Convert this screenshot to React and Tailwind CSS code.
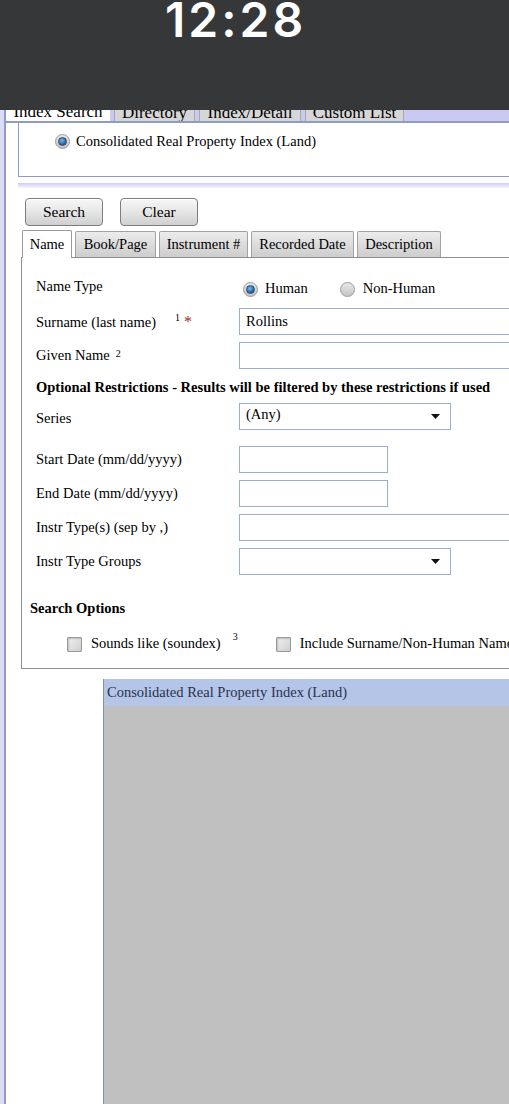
export default function App() {
  return (
    <div className="relative w-[509px] h-[1104px] overflow-hidden bg-white [font-family:Liberation_Serif,Times_New_Roman,serif] text-black">
      {/* status bar */}
      <div className="h-[110px] bg-[#363739] overflow-hidden">
        <div className="pl-[165px] [font-family:Inter,sans-serif] font-semibold text-[48px] tracking-[3px] leading-[40px] text-white">
          12:28
        </div>
      </div>

      <div className="flex h-[994px]">
        {/* left page edge */}
        <div className="w-[4px] bg-[#dcdcfa] shrink-0" />
        <div className="w-[2px] bg-[#8e9cc2] shrink-0" />

        <div className="w-[720px] shrink-0">
          {/* top tab strip (cut off under status bar) */}
          <div className="h-[11px] bg-[#c9c9f3] overflow-hidden">
            <div className="flex gap-[4px] mt-[-11px] h-[26px] text-[17px] leading-[26px]">
              <div className="w-[104px] bg-white text-center">Index Search</div>
              <div className="w-[81px] bg-[#d6d6d6] border border-[#a8a8a8] text-center">Directory</div>
              <div className="w-[102px] bg-[#d6d6d6] border border-[#a8a8a8] text-center">Index/Detail</div>
              <div className="w-[99px] bg-[#d6d6d6] border border-[#a8a8a8] text-center">Custom List</div>
            </div>
          </div>
          <div className="h-[2px] bg-[#8e9cc2]" />

          {/* index choice */}
          <div className="ml-[12px] h-[54px] border-l-[1.5px] border-b-[1.5px] border-[#8e9cc2] flex items-start pt-[8px] pl-[36px]">
            <div className="flex items-center gap-[6px] text-[14.5px]">
              <Radio checked />
              <span>Consolidated Real Property Index (Land)</span>
            </div>
          </div>
          <div className="ml-[12px] mt-[6px] h-[5px] bg-gradient-to-b from-[#cfcff5] to-[#f4f4fd]" />

          {/* buttons */}
          <div className="flex gap-[17px] ml-[19px] mt-[10px]">
            <Button>Search</Button>
            <Button>Clear</Button>
          </div>

          {/* tabs */}
          <div className="flex items-end gap-[3px] ml-[16px] mt-[4px] h-[27px]">
            <div className="h-[28px] w-[50px] bg-white border border-b-0 border-[#9a9a9a] rounded-t-[2px] text-[14.5px] flex items-center justify-center relative top-[1px]">
              Name
            </div>
            <Tab w="w-[81px]">Book/Page</Tab>
            <Tab w="w-[89px]">Instrument #</Tab>
            <Tab w="w-[103px]">Recorded Date</Tab>
            <Tab w="w-[84px]">Description</Tab>
          </div>

          {/* form panel */}
          <div className="ml-[15px] border border-[#8f8f8f] pl-[14px] pt-[16px] pb-[14px] text-[14.5px]">
            <div className="flex items-center h-[26px]">
              <Label>Name Type</Label>
              <div className="flex items-center mt-[4px] ml-[4px]">
                <Radio checked />
                <span className="ml-[7px]">Human</span>
                <span className="ml-[32px] flex"><Radio /></span>
                <span className="ml-[8px]">Non-Human</span>
              </div>
            </div>

            <div className="flex items-center h-[27px] mt-[8px]">
              <div className="w-[203px] shrink-0 whitespace-nowrap">
                <span>Surname (last name)</span>
                <span className="text-[10px] ml-[19px] relative top-[-6px]">1</span>
                <span className="ml-[4px] text-[#a52a2a] text-[16px]">*</span>
              </div>
              <Input wide value="Rollins" />
            </div>

            <div className="flex items-center h-[27px] mt-[7px]">
              <div className="w-[203px] shrink-0 whitespace-nowrap">
                <span>Given Name</span>
                <span className="text-[10px] ml-[6px] relative top-[-3px]">2</span>
              </div>
              <Input wide />
            </div>

            <div className="h-[20px] mt-[9px] flex items-center font-bold whitespace-nowrap">
              Optional Restrictions - Results will be filtered by these restrictions if used
            </div>

            <div className="flex items-end h-[27px] mt-[5px]">
              <Label>Series</Label>
              <Select value="(Any)" />
            </div>

            <div className="flex items-center h-[27px] mt-[16px]">
              <Label>Start Date (mm/dd/yyyy)</Label>
              <Input />
            </div>
            <div className="flex items-center h-[27px] mt-[7px]">
              <Label>End Date (mm/dd/yyyy)</Label>
              <Input />
            </div>
            <div className="flex items-center h-[27px] mt-[7px]">
              <Label>Instr Type(s) (sep by ,)</Label>
              <Input wide />
            </div>
            <div className="flex items-center h-[27px] mt-[7px]">
              <Label>Instr Type Groups</Label>
              <Select />
            </div>

            <div className="h-[20px] mt-[24px] ml-[-6px] flex items-center font-bold">Search Options</div>

            <div className="flex items-center h-[20px] mt-[15px] ml-[31px] whitespace-nowrap">
              <Checkbox />
              <span className="ml-[9px]">Sounds like (soundex)</span>
              <span className="text-[10px] ml-[12px] relative top-[-8px]">3</span>
              <span className="ml-[38px] flex"><Checkbox /></span>
              <span className="ml-[9px]">Include Surname/Non-Human Name</span>
            </div>
          </div>

          {/* results */}
          <div className="ml-[97px] mt-[10px] border-l border-[#7f8fb2]">
            <div className="h-[27px] bg-[#b5c5e8] text-[14.5px] text-[#27324d] flex items-center pl-[3px]">
              Consolidated Real Property Index (Land)
            </div>
            <div className="h-[420px] bg-[#c0c0c0]" />
          </div>
        </div>
      </div>
    </div>
  );
}

function Label({ children }) {
  return <div className="w-[203px] shrink-0 whitespace-nowrap">{children}</div>;
}

function Input({ wide, value }) {
  return (
    <div
      className={`${wide ? "w-[400px]" : "w-[149px]"} h-[27px] shrink-0 border-[1.5px] border-[#9aaed2] bg-white flex items-center pl-[6px] text-[14.5px]`}
    >
      {value}
    </div>
  );
}

function Select({ value }) {
  return (
    <div className="w-[212px] h-[27px] shrink-0 border-[1.5px] border-[#9aaed2] bg-white flex items-center justify-between pl-[6px] pr-[10px] text-[14.5px] pb-[3px]">
      <span>{value}</span>
      <svg width="9" height="5" viewBox="0 0 9 5" className="mt-[3px]">
        <path d="M0 0h9L4.5 5z" fill="#111" />
      </svg>
    </div>
  );
}

function Button({ children }) {
  return (
    <div className="w-[78px] h-[28px] rounded-[4px] border border-[#7e7e7e] bg-gradient-to-b from-[#f7f7f7] via-[#e6e6e6] to-[#cfcfcf] shadow-[inset_0_1px_0_#fff] flex items-center justify-center text-[15.5px]">
      {children}
    </div>
  );
}

function Tab({ w, children }) {
  return (
    <div className={`${w} h-[26px] border border-b-0 border-[#a2a2a2] rounded-t-[2px] bg-gradient-to-b from-[#ececec] to-[#cdcdcd] text-[14.5px] flex items-center justify-center whitespace-nowrap`}>
      {children}
    </div>
  );
}

function Radio({ checked }) {
  return (
    <span className="inline-flex w-[15px] h-[15px] rounded-full border border-[#9a9a9a] bg-gradient-to-b from-[#e8e8e8] to-[#c4c4c4] items-center justify-center shrink-0">
      {checked && (
        <span className="w-[9px] h-[9px] rounded-full bg-[radial-gradient(circle_at_40%_35%,#7fb6e6,#1f5f9e_70%)] border border-[#2a4a70]" />
      )}
    </span>
  );
}

function Checkbox() {
  return (
    <span className="inline-block w-[15px] h-[15px] border border-[#9a9a9a] rounded-[1px] bg-gradient-to-br from-[#f2f2f2] to-[#cfcfcf] shadow-[inset_1px_1px_2px_#bdbdbd] shrink-0" />
  );
}
